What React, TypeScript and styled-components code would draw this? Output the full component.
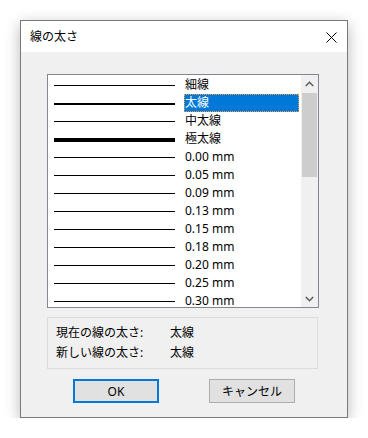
import React from "react";
import styled, { createGlobalStyle } from "styled-components";

const GlobalStyle = createGlobalStyle`
  html, body {
    margin: 0;
    padding: 0;
    background: #ffffff;
  }
  body {
    font-family: "Noto Sans", "Noto Sans CJK JP", sans-serif;
    font-size: 12px;
    color: #000;
  }
`;

const Page = styled.div`
  padding: 20px 0 0 20px;
`;

const Window = styled.div`
  width: 328px;
  height: 398px;
  box-sizing: border-box;
  border: 1px solid #7a7a7a;
  box-shadow: 0 4px 14px rgba(0, 0, 0, 0.28);
  display: flex;
  flex-direction: column;
  background: #f0f0f0;
`;

const TitleBar = styled.div`
  height: 31px;
  flex-shrink: 0;
  background: #ffffff;
  display: flex;
  align-items: center;
  justify-content: space-between;
  padding: 0 9px;
`;

const Title = styled.span`
  font-size: 12px;
  line-height: 16px;
  margin-top: 1px;
`;

const CloseButton = styled.div`
  width: 12px;
  height: 12px;
  display: flex;
  align-items: center;
  justify-content: center;
  margin-right: 1px;
  margin-top: 2px;
`;

const Body = styled.div`
  flex: 1;
  padding: 22px 0 0 26px;
  display: flex;
  flex-direction: column;
`;

const ListBox = styled.div`
  width: 272px;
  height: 234px;
  box-sizing: border-box;
  flex-shrink: 0;
  border: 1px solid #828790;
  background: #ffffff;
  display: flex;
  overflow: hidden;
`;

const Rows = styled.div`
  flex: 1;
  padding-top: 1px;
  display: flex;
  flex-direction: column;
`;

const Row = styled.div`
  height: 18px;
  flex-shrink: 0;
  display: flex;
  align-items: center;
  padding-left: 6px;
`;

const Swatch = styled.div<{ $w: number }>`
  width: 121px;
  height: ${(p) => p.$w}px;
  background: #000;
  margin-right: 9px;
  margin-top: ${(p) => (p.$w > 1 ? 1 : 0)}px;
`;

const Label = styled.div<{ $selected?: boolean }>`
  width: 115px;
  height: 18px;
  box-sizing: border-box;
  line-height: 16px;
  border: 1px dotted ${(p) => (p.$selected ? "#ff9b3a" : "transparent")};
  background: ${(p) => (p.$selected ? "#0078d7" : "transparent")};
  color: ${(p) => (p.$selected ? "#ffffff" : "#000000")};
  white-space: nowrap;
`;

const ScrollBar = styled.div`
  width: 17px;
  background: #f0f0f0;
  display: flex;
  flex-direction: column;
`;

const Arrow = styled.div`
  height: 17px;
  flex-shrink: 0;
  display: flex;
  align-items: center;
  justify-content: center;
`;

const Thumb = styled.div`
  margin: 1px 1px 0 1px;
  height: 84px;
  flex-shrink: 0;
  background: #cdcdcd;
`;

const Track = styled.div`
  flex: 1;
`;

const InfoGroup = styled.div`
  margin-top: 9px;
  width: 271px;
  height: 52px;
  box-sizing: border-box;
  flex-shrink: 0;
  border: 1px solid #dcdcdc;
  padding: 5px 0 0 8px;
  display: grid;
  grid-template-columns: 114px auto;
  grid-auto-rows: 20px;
  align-content: start;
`;

const InfoCell = styled.div`
  line-height: 20px;
  white-space: nowrap;
`;

const Buttons = styled.div`
  display: flex;
  margin-top: 10px;
  padding-left: 26px;
  gap: 50px;
`;

const Button = styled.div<{ $default?: boolean }>`
  width: 86px;
  height: 24px;
  box-sizing: border-box;
  background: #e1e1e1;
  border: ${(p) => (p.$default ? "2px solid #0078d7" : "1px solid #adadad")};
  display: flex;
  align-items: center;
  justify-content: center;
  font-size: 12px;
`;

const items: { label: string; w: number }[] = [
  { label: "細線", w: 1 },
  { label: "太線", w: 2 },
  { label: "中太線", w: 1 },
  { label: "極太線", w: 4 },
  { label: "0.00 mm", w: 1 },
  { label: "0.05 mm", w: 1 },
  { label: "0.09 mm", w: 1 },
  { label: "0.13 mm", w: 1 },
  { label: "0.15 mm", w: 1 },
  { label: "0.18 mm", w: 1 },
  { label: "0.20 mm", w: 1 },
  { label: "0.25 mm", w: 1 },
  { label: "0.30 mm", w: 1 },
];

export default function App() {
  return (
    <>
      <GlobalStyle />
      <Page>
        <Window>
          <TitleBar>
            <Title>線の太さ</Title>
            <CloseButton>
              <svg width="11" height="11" viewBox="0 0 11 11">
                <path d="M0.5 0.5 L10.5 10.5 M10.5 0.5 L0.5 10.5" stroke="#000" strokeWidth="1" />
              </svg>
            </CloseButton>
          </TitleBar>
          <Body>
            <ListBox>
              <Rows>
                {items.map((it, i) => (
                  <Row key={it.label}>
                    <Swatch $w={it.w} />
                    <Label $selected={i === 1}>{it.label}</Label>
                  </Row>
                ))}
              </Rows>
              <ScrollBar>
                <Arrow>
                  <svg width="9" height="6" viewBox="0 0 9 6">
                    <path d="M0.8 5 L4.5 1.3 L8.2 5" stroke="#606060" strokeWidth="1.6" fill="none" />
                  </svg>
                </Arrow>
                <Thumb />
                <Track />
                <Arrow>
                  <svg width="9" height="6" viewBox="0 0 9 6">
                    <path d="M0.8 1 L4.5 4.7 L8.2 1" stroke="#606060" strokeWidth="1.6" fill="none" />
                  </svg>
                </Arrow>
              </ScrollBar>
            </ListBox>
            <InfoGroup>
              <InfoCell>現在の線の太さ:</InfoCell>
              <InfoCell>太線</InfoCell>
              <InfoCell>新しい線の太さ:</InfoCell>
              <InfoCell>太線</InfoCell>
            </InfoGroup>
            <Buttons>
              <Button $default>OK</Button>
              <Button>キャンセル</Button>
            </Buttons>
          </Body>
        </Window>
      </Page>
    </>
  );
}
